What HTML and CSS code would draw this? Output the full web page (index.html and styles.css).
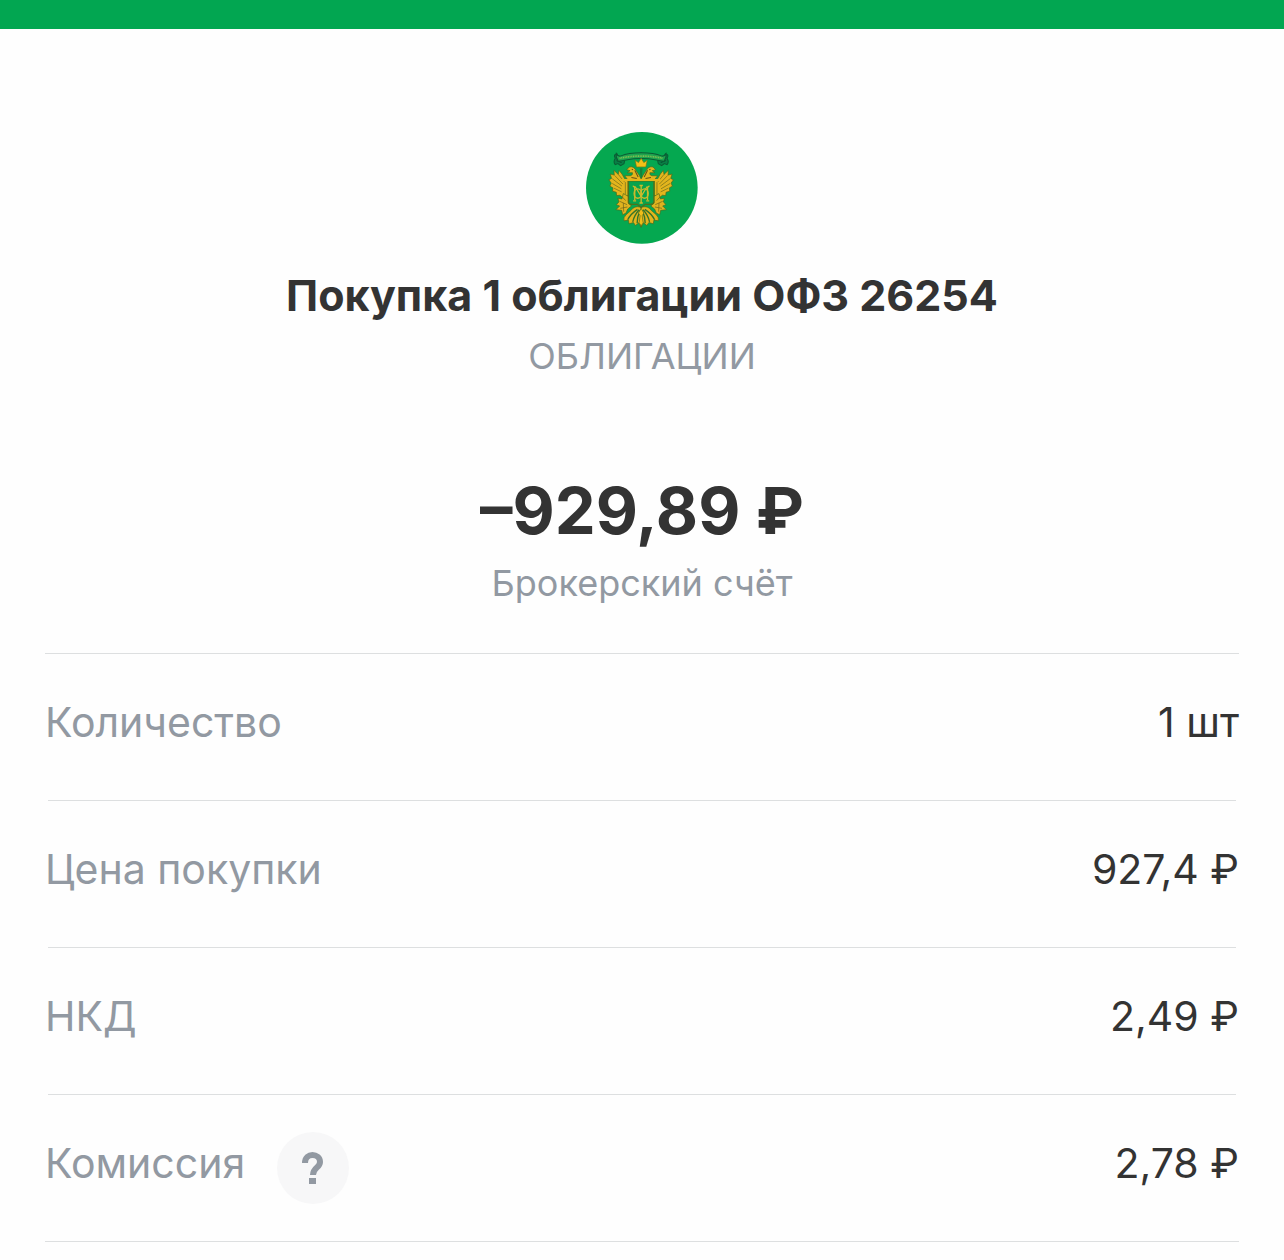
FILE: index.html
```
<!DOCTYPE html>
<html lang="ru">
<head>
    <meta charset="UTF-8">
    <meta name="viewport" content="width=device-width, initial-scale=1">
    <title>Покупка 1 облигации ОФЗ 26254</title>
    <link rel="stylesheet" href="styles.css">
</head>
<body>

<div class="topbar"></div>

<main class="operation">
    <header class="head">
        <svg class="logo" viewBox="21 19 333 333" aria-hidden="true">
            <circle cx="187" cy="185" r="166" fill="#05a850"/>
            <defs>
                <!-- left half of the eagle, mirrored below -->
                <g id="half">
                    <!-- wing -->
                    <path d="M146 160 L136 158 L128 144 L119 133 L117 145 L104 133 L105 147 L93 144 L97 157 L89 161 L96 171 L92 180 L101 185 L100 195 L111 198 L112 208 L122 207 L130 214 L146 208 Z" fill="#e3b51d" stroke="#4b681c" stroke-width="2"/>
                    <path d="M106 148 L131 174 M99 158 L128 180 M99 172 L126 188 M104 186 L127 197 M117 145 L135 167 M138 168 V204" fill="none" stroke="#6d6a1a" stroke-width="2"/>
                    <!-- head and neck -->
                    <path d="M184 157 Q180 147 172 137 Q163 119 150 123 L142 131 L152 134 L144 140 L159 140 Q161 147 153 149 L136 149 L146 162 L184 164 Z" fill="#e3b51d" stroke="#4b681c" stroke-width="2"/>
                    <path d="M166 133 L176 153 M156 154 L172 157 M157 130 L161 131" fill="none" stroke="#654f16" stroke-width="3"/>
                    <!-- leg -->
                    <path d="M132 202 L148 211 L147 230 L156 239 L145 248 L140 260 L130 265 L127 252 L110 250 L121 239 L111 235 L119 227 L116 216 L128 218 Z" fill="#dfb31f" stroke="#4b681c" stroke-width="2"/>
                    <path d="M121 225 L143 235 M129 212 L139 223 M123 246 L144 242 M132 230 L133 256" fill="none" stroke="#686119" stroke-width="2"/>
                    <!-- tail -->
                    <path d="M182 242 Q164 238 155 252 L140 265 Q131 274 134 283 L147 281 L149 292 L162 288 L168 297 L178 289 L185 302 L185 242 Z" fill="#e3b51d" stroke="#4b681c" stroke-width="2"/>
                    <path d="M174 249 Q153 263 145 280 M179 250 Q164 267 160 286 M182 252 Q173 271 173 290" fill="none" stroke="#35742a" stroke-width="4"/>
                    <!-- ribbon -->
                    <path d="M113 84 Q101 86 108 97 Q101 108 108 116 L116 113 L124 119 L134 113 L136 104 L122 101 Z" fill="#087f45" stroke="#0b5c34" stroke-width="3"/>
                    <path d="M112 104 L127 110" fill="none" stroke="#074f30" stroke-width="3"/>
                    <path d="M186 81 Q146 81 125 90 Q116 93 111 83 Q109 96 117 106 Q128 104 140 102 Q162 98 186 98" fill="#1fa44f" stroke="#0b5c34" stroke-width="3"/>
                </g>
            </defs>
            <use href="#half"/>
            <use href="#half" transform="translate(370 0) scale(-1 1)"/>
            <path d="M121 97 Q185 84 249 97" fill="none" stroke="#84bf50" stroke-width="5" stroke-dasharray="3 2"/>
            <!-- crown -->
            <path d="M171 123 L167 103 L177 110 L185 97 L193 110 L203 103 L199 123 Z" fill="#f3c017" stroke="#6b7618" stroke-width="2"/>
            <path d="M181 127 L189 127 L187 156 L183 156 Z" fill="#17803a"/>
            <!-- shield -->
            <path d="M147 164 H223 V226 Q223 234 214 234 H197 L185 243 L173 234 H156 Q147 234 147 226 Z" fill="#07a34d" stroke="#50701b" stroke-width="4"/>
            <path d="M128 162 H242" stroke="#e5b51a" stroke-width="6"/>
            <!-- monogram -->
            <g fill="none" stroke="#ccba2c" stroke-width="4">
                <path d="M160 180 Q166 180 166 187 V221 M161 224 H170 M210 180 Q204 180 204 187 V221 M200 224 H209"/>
                <path d="M167 181 L185 210 L203 181"/>
                <path d="M185 178 V230 M180 178 H190 M180 230 H190"/>
                <ellipse cx="175" cy="202" rx="11" ry="14"/>
                <ellipse cx="195" cy="202" rx="11" ry="14"/>
            </g>
            <!-- tail centre -->
            <path d="M185 246 L193 260 L188 268 L191 289 L185 298 L179 289 L182 268 L177 260 Z" fill="#f0bd18" stroke="#50701b" stroke-width="2"/>
        </svg>
        <h1 class="title">Покупка 1 облигации ОФЗ 26254</h1>
        <p class="type">ОБЛИГАЦИИ</p>
        <p class="amount">–929,89 ₽</p>
        <p class="account">Брокерский счёт</p>
    </header>

    <dl class="details">
        <div class="row">
            <dt>Количество</dt>
            <dd>1 шт</dd>
        </div>
        <div class="row">
            <dt>Цена покупки</dt>
            <dd>927,4 ₽</dd>
        </div>
        <div class="row">
            <dt>НКД</dt>
            <dd>2,49 ₽</dd>
        </div>
        <div class="row">
            <dt>Комиссия</dt>
            <dd class="hint"><button class="help" type="button" aria-label="Подробнее о комиссии">
                <svg viewBox="0 0 22 32" aria-hidden="true">
                    <path d="M3 11 C3 0 18 1 18 10 C18 16 11 15 11 23" fill="none" stroke="#9299a2" stroke-width="6"/>
                    <rect x="7" y="26" width="7" height="6" fill="#9299a2"/>
                </svg>
            </button></dd>
            <dd>2,78 ₽</dd>
        </div>
    </dl>
</main>

</body>
</html>
```
FILE: styles.css
```
* {
    margin: 0;
    padding: 0;
    box-sizing: border-box;
}

body {
    background: #fefefe;
    color: #333;
    font-family: Inter, "Liberation Sans", sans-serif;
}

.topbar {
    height: 29px;
    background: #02a651;
}

.operation {
    padding: 103px 45px 0;
}

.head {
    display: flex;
    flex-direction: column;
    align-items: center;
    text-align: center;
}

.logo {
    display: block;
    width: 112px;
    height: 112px;
}

.title {
    margin-top: 26px;
    font-size: 43px;
    line-height: 50px;
    font-weight: 700;
}

.type {
    margin-top: 14px;
    font-size: 36px;
    line-height: 44px;
    color: #9299a2;
}

.amount {
    margin-top: 95px;
    font-size: 65px;
    line-height: 76px;
    font-weight: 700;
}

.account {
    margin-top: 12px;
    font-size: 36px;
    line-height: 44px;
    color: #9299a2;
}

.details {
    margin-top: 48px;
    border-top: 1px solid #dddfe0;
    border-bottom: 1px solid #dddfe0;
}

.row {
    display: flex;
    align-items: center;
    min-height: 147px;
    font-size: 41px;
    line-height: 50px;
}

.row:first-child {
    min-height: 146px;
}

/* inner dividers are a little shorter than the outer ones */
.row + .row {
    background: linear-gradient(#dddfe0, #dddfe0) center top / calc(100% - 6px) 1px no-repeat;
}

.row dt {
    padding-bottom: 10px;
    color: #9299a2;
}

.row dd {
    margin-left: auto;
    padding-bottom: 10px;
    white-space: nowrap;
}

.row .hint {
    margin-left: 32px;
    padding-bottom: 0;
}

.help {
    display: flex;
    align-items: center;
    justify-content: center;
    width: 72px;
    height: 72px;
    border: 0;
    border-radius: 50%;
    background: #f7f7f8;
    cursor: pointer;
}

.help svg {
    width: 22px;
    height: 32px;
}
```
